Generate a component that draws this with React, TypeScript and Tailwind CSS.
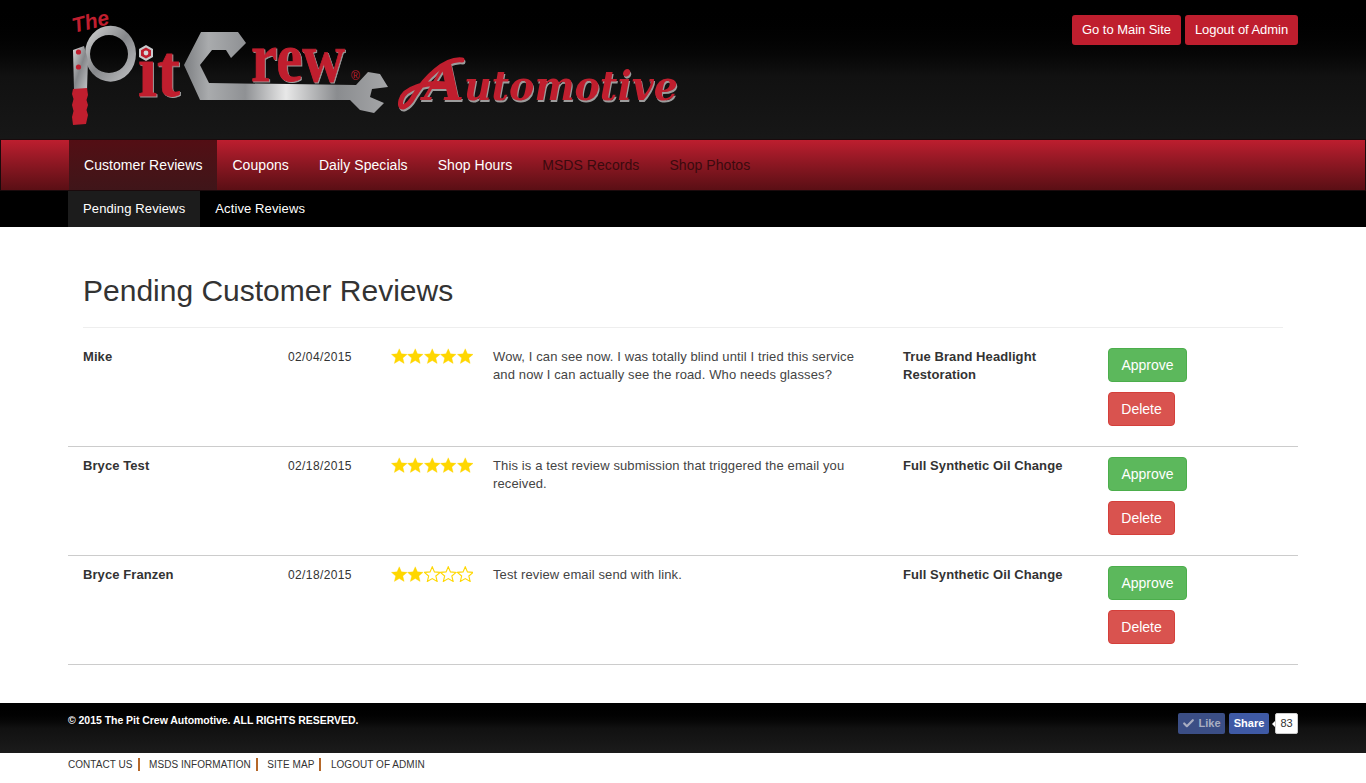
import { Check } from "lucide-react";

const navItems = [
  { label: "Customer Reviews", active: true },
  { label: "Coupons" },
  { label: "Daily Specials" },
  { label: "Shop Hours" },
  { label: "MSDS Records", muted: true },
  { label: "Shop Photos", muted: true },
];

const reviews = [
  {
    name: "Mike",
    date: "02/04/2015",
    stars: 5,
    text: "Wow, I can see now. I was totally blind until I tried this service and now I can actually see the road. Who needs glasses?",
    product: "True Brand Headlight Restoration",
  },
  {
    name: "Bryce Test",
    date: "02/18/2015",
    stars: 5,
    text: "This is a test review submission that triggered the email you received.",
    product: "Full Synthetic Oil Change",
  },
  {
    name: "Bryce Franzen",
    date: "02/18/2015",
    stars: 2,
    text: "Test review email send with link.",
    product: "Full Synthetic Oil Change",
  },
];

const footerLinks = ["CONTACT US", "MSDS INFORMATION", "SITE MAP", "LOGOUT OF ADMIN"];

const Logo = () => (
  <svg width="640" height="139" viewBox="60 0 640 139" className="-ml-2 shrink-0">
    <defs>
      <linearGradient id="steel" x1="0" y1="0" x2="1" y2="0">
        <stop offset="0" stopColor="#7d7f82" />
        <stop offset="0.12" stopColor="#a9abad" />
        <stop offset="0.3" stopColor="#8f9194" />
        <stop offset="0.5" stopColor="#e8e8e8" />
        <stop offset="0.75" stopColor="#8a8c8f" />
        <stop offset="1" stopColor="#a5a6a8" />
      </linearGradient>
      <linearGradient id="ring" x1="0" y1="0" x2="1" y2="1">
        <stop offset="0" stopColor="#d8d8d8" />
        <stop offset="0.5" stopColor="#85878a" />
        <stop offset="1" stopColor="#c4c5c7" />
      </linearGradient>
    </defs>

    {/* P made from a wrench */}
    <path
      fillRule="evenodd"
      d="M85 53.7 a25.5 28 0 1 0 51 0 a25.5 28 0 1 0 -51 0 Z M90 54 a19 19 0 1 0 38 0 a19 19 0 1 0 -38 0 Z"
      fill="url(#ring)"
    />
    <path d="M73 50 L84 46 L88 60 L87 90 L74 90 Z" fill="url(#ring)" />
    <circle cx="78.5" cy="52" r="2.6" fill="#c01e2e" />
    <circle cx="78.5" cy="67" r="2.6" fill="#c01e2e" />
    <path
      d="M73 89 L87 88 L88 95 L86.5 100 L88 105 L86.5 110 L88 115 L86 124 L73 125 L72 117 L73.5 111 L72 105 L73.5 99 L72 94 Z"
      fill="#c01e2e"
    />
    <text
      x="74"
      y="33"
      transform="rotate(-14 74 33)"
      fontFamily="'Liberation Sans', sans-serif"
      fontWeight="700"
      fontStyle="italic"
      fontSize="21"
      fill="#c01e2e"
    >
      The
    </text>

    {/* it + hex nut */}
    <path d="M146 45 L153 49 L153 57 L146 61 L139 57 L139 49 Z" fill="#c9cacc" />
    <path d="M146 47.5 L151 50.2 L151 55.8 L146 58.5 L141 55.8 L141 50.2 Z" fill="#c01e2e" />
    <circle cx="146" cy="53" r="2.4" fill="#d5d6d8" />
    <text
      x="138"
      y="96"
      fontFamily="'Liberation Serif', serif"
      fontWeight="700"
      fontSize="74"
      textLength="42"
      lengthAdjust="spacingAndGlyphs"
      fill="#c01e2e"
      stroke="#c01e2e"
      strokeWidth="0.8"
      className="drop-shadow-[1px_1px_0_#a0a0a0]"
    >
      ıt
    </text>

    {/* C made from a wrench */}
    <path
      d="M201 32 L238 32 L246 43 L231 58 L226 50 L212 50 L200 65 L209 83 L356 85 L368 72 L380 74 L388 87 L372 89 L370 97 L384 103 L374 113 L360 110 L350 100 L200 100 L184 65 Z"
      fill="url(#steel)"
    />
    <text
      x="251"
      y="81"
      fontFamily="'Liberation Serif', serif"
      fontWeight="700"
      fontSize="70"
      textLength="94"
      lengthAdjust="spacingAndGlyphs"
      fill="#c01e2e"
      stroke="#c01e2e"
      strokeWidth="0.8"
      className="drop-shadow-[1px_1px_0_#a0a0a0]"
    >
      rew
    </text>
    <text x="351" y="80" fontFamily="'Liberation Sans', sans-serif" fontSize="12" fill="#c01e2e">
      ®
    </text>

    {/* Automotive */}
    <g className="drop-shadow-[1.5px_2px_0_#9c9c9c]">
      <path
        d="M462 60 C445 58 425 78 414 96 C408 107 398 112 401 100 C404 88 425 82 446 84"
        fill="none"
        stroke="#c01e2e"
        strokeWidth="5"
        strokeLinecap="round"
      />
      <text
        x="424"
        y="100"
        fontFamily="'DejaVu Serif', serif"
        fontWeight="700"
        fontStyle="italic"
        fontSize="52"
        fill="#c01e2e"
      >
        A
      </text>
      <text
        x="464"
        y="100"
        fontFamily="'DejaVu Serif', serif"
        fontWeight="700"
        fontStyle="italic"
        fontSize="41"
        textLength="214"
        lengthAdjust="spacingAndGlyphs"
        fill="#c01e2e"
      >
        utomotive
      </text>
    </g>
  </svg>
);

const Stars = ({ count }: { count: number }) => (
  <div className="flex">
    {[0, 1, 2, 3, 4].map((i) => (
      <svg key={i} width="16.5" height="16" viewBox="0 0 24 23" className="shrink-0">
        <polygon
          points="12,1 15.2,8.4 23.4,9.1 17.2,14.4 19.1,22.3 12,18.1 4.9,22.3 6.8,14.4 0.6,9.1 8.8,8.4"
          fill={i < count ? "#ffd700" : "#ffffff"}
          stroke="#ffd700"
          strokeWidth={i < count ? 0.5 : 1.6}
        />
      </svg>
    ))}
  </div>
);

export default function App() {
  return (
    <div className="font-['Liberation_Sans',Arial,sans-serif] text-[14px] leading-[20px] text-[#333] bg-white min-h-[783px]">
      {/* Header */}
      <header className="h-[139px] bg-gradient-to-b from-black via-[#111111] via-55% to-[#171717]">
        <div className="w-[1230px] mx-auto flex justify-between">
          <Logo />
          <div className="flex gap-1 pt-[15px] shrink-0">
            <a className="h-[30px] w-[109px] text-center rounded-[3px] bg-[#bf1e2e] text-white text-[13px] tracking-[-0.05px] leading-[29px]">Go to Main Site</a>
            <a className="h-[30px] w-[113px] text-center rounded-[3px] bg-[#bf1e2e] text-white text-[13px] tracking-[-0.05px] leading-[29px]">Logout of Admin</a>
          </div>
        </div>
      </header>

      {/* Main nav */}
      <nav className="h-[52px] border border-[#1a0a0c] bg-gradient-to-b from-[#bd1e2f] to-[#5a0f15]">
        <div className="w-[1230px] mx-auto flex h-full pl-px">
          {navItems.map((item) => (
            <a
              key={item.label}
              className={
                "px-[15px] leading-[50px] text-[14px] tracking-[0.06px] " +
                (item.active
                  ? "bg-gradient-to-b from-[#530e14] to-[#3f1519] text-white"
                  : item.muted
                    ? "text-[#3a0a0e]"
                    : "text-white")
              }
            >
              {item.label}
            </a>
          ))}
        </div>
      </nav>

      {/* Sub nav */}
      <div className="h-[36px] bg-black">
        <div className="w-[1230px] mx-auto flex h-full text-[13px] tracking-[0.12px]">
          <a className="px-[15px] leading-[35px] bg-[#1c1c1c] text-white">Pending Reviews</a>
          <a className="px-[15px] leading-[35px] text-white">Active Reviews</a>
        </div>
      </div>

      {/* Content */}
      <main className="w-[1230px] mx-auto pb-[38px]">
        <div className="mx-[15px] pt-[45px] pb-[17px] border-b border-[#eeeeee]">
          <h1 className="text-[30px] leading-[38px] text-[#333]">Pending Customer Reviews</h1>
        </div>
        {reviews.map((review, idx) => (
          <div
            key={review.name}
            className={
              "grid grid-cols-12 border-b border-[#cccccc] pb-[20px] " + (idx === 0 ? "pt-[20px]" : "pt-[10px]")
            }
          >
            <div className="col-span-2 px-[15px] font-bold text-[13px] tracking-[0.08px] leading-[18px]">{review.name}</div>
            <div className="col-span-1 px-[15px] -mr-[15px] whitespace-nowrap text-[12px] tracking-[0.38px] leading-[18px]">{review.date}</div>
            <div className="col-span-1 px-[15px]">
              <Stars count={review.stars} />
            </div>
            <div className="col-span-4 px-[15px] text-[13px] leading-[18px] text-[#444] tracking-[0.12px]">{review.text}</div>
            <div className="col-span-2 px-[15px] font-bold text-[13px] tracking-[0.08px] leading-[18px]">{review.product}</div>
            <div className="col-span-2 px-[15px] flex flex-col items-start gap-[10px] -mt-[10px] pt-[10px]">
              <button className="h-[34px] w-[79px] rounded-[4px] bg-[#5cb85c] border border-[#4cae4c] text-white">Approve</button>
              <button className="h-[34px] w-[67px] rounded-[4px] bg-[#d9534f] border border-[#d43f3a] text-white">Delete</button>
            </div>
          </div>
        ))}
      </main>

      {/* Footer */}
      <footer className="h-[50px] bg-gradient-to-b from-black via-[#111111] via-50% to-[#1b1b1b]">
        <div className="w-[1230px] mx-auto flex justify-between pt-[10px]">
          <p className="text-[10.5px] tracking-[-0.04px] leading-[14px] font-bold text-white">© 2015 The Pit Crew Automotive. ALL RIGHTS RESERVED.</p>
          <div className="flex items-start">
            <span className="h-[21px] w-[47px] rounded-[2px] bg-[#3b4e85] text-[#a9aec2] text-[11px] leading-[21px] font-bold flex items-center justify-center gap-[3px]">
              <Check size={13} strokeWidth={4} />
              Like
            </span>
            <span className="h-[21px] w-[40px] ml-[4px] rounded-[2px] bg-[#3f5aa5] text-white text-[11px] leading-[21px] font-bold text-center">
              Share
            </span>
            <span className="relative h-[21px] w-[23px] ml-[6px] bg-white border border-[#cccccc] rounded-[2px] text-[#333] text-[11px] leading-[19px] text-center">
              83
              <span className="absolute left-[-4px] top-[7px] w-0 h-0 border-y-[3px] border-y-transparent border-r-[3px] border-r-white" />
            </span>
          </div>
        </div>
      </footer>

      <div className="w-[1230px] mx-auto flex pt-[5px] text-[10px] tracking-[0.05px] leading-[13px] text-[#333]">
        {footerLinks.map((link, idx) => (
          <span
            key={link}
            className={idx < footerLinks.length - 1 ? "pr-[5px] mr-[9.5px] border-r-2 border-[#b5682a]" : ""}
          >
            {link}
          </span>
        ))}
      </div>
    </div>
  );
}
